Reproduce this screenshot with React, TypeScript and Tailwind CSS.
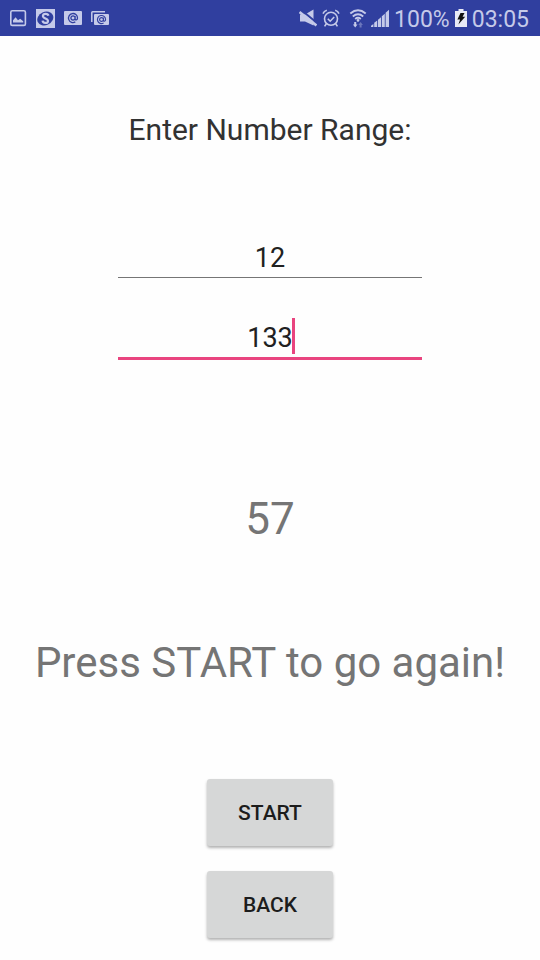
import { useState } from "react";

function PictureIcon() {
  return (
    <svg width="18" height="18" viewBox="0 0 18 18" aria-hidden="true">
      <rect x="1.8" y="1.8" width="14.6" height="14.6" rx="1.5" fill="none" stroke="currentColor" strokeWidth="1.6" />
      <path d="M4 13.5v-2.2l2.6-3 2.4 3 2.2-1.6 3 2.6v1.2z" fill="currentColor" />
    </svg>
  );
}

function CoinIcon() {
  return (
    <svg width="19" height="19" viewBox="0 0 19 19" aria-hidden="true">
      <rect width="19" height="19" fill="currentColor" />
      <ellipse cx="9.3" cy="9.5" rx="8.3" ry="6.6" transform="rotate(-25 9.3 9.5)" fill="#303f9f" />
      <path d="M12.4 6.8C12 4.4 7.2 4.2 6.9 6.9c-.2 2.8 5.4 2.4 5.1 5.2-.3 2.7-5.2 2.4-5.4-.4" fill="none" stroke="currentColor" strokeWidth="2.2" />
    </svg>
  );
}

function AtSign() {
  return (
    <path
      d="M2.1 0a2.1 2.1 0 1 1-4.2 0 2.1 2.1 0 0 1 4.2 0zm0-2.1v2.7c0 2 2.4 1.7 2.4-.6a4.5 4.5 0 1 0-2.2 3.9"
      fill="none"
      stroke="#303f9f"
      strokeWidth="1.3"
    />
  );
}

function MailIcon() {
  return (
    <svg width="18" height="14" viewBox="0 0 18 14" aria-hidden="true">
      <rect width="18" height="14" rx="1" fill="currentColor" />
      <g transform="translate(9 7)">
        <AtSign />
      </g>
    </svg>
  );
}

function MailStackIcon() {
  return (
    <svg width="18" height="14" viewBox="0 0 18 14" aria-hidden="true">
      <path d="M.8 11V1.6Q.8.8 1.6.8H14" fill="none" stroke="currentColor" strokeWidth="1.5" />
      <rect x="3" y="3" width="15" height="11" rx="1" fill="currentColor" />
      <g transform="translate(10.5 8.5) scale(.9)">
        <AtSign />
      </g>
    </svg>
  );
}

function MuteIcon() {
  return (
    <svg width="18" height="18" viewBox="0 0 18 18" aria-hidden="true">
      <path d="M1 5.5h5L14.5.5v16L6 12.5H1z" fill="currentColor" />
      <path d="M2 .8 18 14" stroke="#303f9f" strokeWidth="2" />
      <path d="M.5 3 17.5 16.5" stroke="currentColor" strokeWidth="2.6" />
    </svg>
  );
}

function AlarmIcon() {
  return (
    <svg width="18" height="19" viewBox="0 0 18 19" fill="none" stroke="currentColor" strokeWidth="1.6" aria-hidden="true">
      <circle cx="9" cy="9.8" r="6.5" />
      <path d="m5.8 9.8 2.4 2.4 4-4.2M1 4.6Q2 2 4.8 1.2M17 4.6Q16 2 13.2 1.2M4.3 14.8 2.6 17.4M13.7 14.8l1.7 2.6" />
    </svg>
  );
}

function WifiIcon() {
  return (
    <svg width="18" height="19" viewBox="0 0 18 19" aria-hidden="true">
      <path d="M1.3 4.4Q9-2 16.7 4.4M3.8 7.4Q9 3 14.2 7.4M6.2 10Q9 7.7 11.8 10" fill="none" stroke="currentColor" strokeWidth="1.9" />
      <circle cx="9" cy="11.4" r="1.3" fill="currentColor" />
      <path d="M5.2 13h2v2.6h1.3l-2.3 3-2.3-3h1.3z" fill="currentColor" />
      <path d="m11.6 13 2.3 3h-1.3v2.6h-2V16H9.3z" fill="currentColor" opacity=".4" />
    </svg>
  );
}

function SignalIcon() {
  return (
    <svg width="18" height="18" viewBox="0 0 18 18" fill="currentColor" aria-hidden="true">
      <path d="M0 18v-1.3L2.4 15v3zM3.2 18v-4.2l3-2.3V18zM7 18v-7.3l3-2.5V18zM10.8 18V7.2l3-2.5V18zM14.6 18V3.8L18 .8V18z" />
    </svg>
  );
}

function BatteryIcon() {
  return (
    <svg width="12" height="18" viewBox="0 0 12 18" aria-hidden="true">
      <path d="M3.5 0h5v2H12v16H0V2h3.5z" fill="#e8eaf6" />
      <path d="M5.5 4h4L7.6 7.8h2.6L3.4 15.6l1.7-5.2H2.4z" fill="#111" />
    </svg>
  );
}

function StatusBar() {
  return (
    <header className="flex h-9 items-center justify-between bg-[#303f9f] pl-[9px] pr-[11px] text-[#c5cae9]">
      <div className="flex items-center gap-[9px]">
        <PictureIcon />
        <CoinIcon />
        <MailIcon />
        <MailStackIcon />
      </div>
      <div className="flex items-center gap-[5px] text-[23px] leading-7">
        <MuteIcon />
        <AlarmIcon />
        <div className="flex items-center gap-1 pl-1">
          <WifiIcon />
          <SignalIcon />
        </div>
        <span className="pt-[3px]">100%</span>
        <BatteryIcon />
        <time className="pt-[3px]">03:05</time>
      </div>
    </header>
  );
}

const buttonStyle =
  "h-[67px] w-[126px] rounded-[3px] bg-[#d6d7d7] text-[21px] leading-7 font-medium text-[#1c1c1c] shadow-[0_2px_3px_rgba(0,0,0,0.3)]";

export default function App() {
  const [from, setFrom] = useState("12");
  const [to, setTo] = useState("133");

  return (
    <div className="min-h-screen bg-[#fefefe] font-['Roboto',sans-serif]">
      <StatusBar />
      <main className="flex flex-col items-center px-4 pt-[74px] pb-[22px] text-center text-[#757575]">
        <h1 className="text-[30px] leading-10 text-[#323232]">Enter Number Range:</h1>

        <div className="mt-[87px] flex w-3/5 flex-col gap-10">
          <input
            aria-label="Range start"
            inputMode="numeric"
            value={from}
            onChange={(e) => setFrom(e.target.value)}
            className="h-[41px] w-full border-b border-[#757575] bg-transparent pt-px text-center text-[27px] leading-9 text-[#212121] outline-none"
          />
          <div className="relative">
            <input
              aria-label="Range end"
              inputMode="numeric"
              value={to}
              onChange={(e) => setTo(e.target.value)}
              className="block h-[42px] w-full border-b-3 border-[#e9447f] bg-transparent pt-px text-center text-[27px] leading-9 text-[#212121] caret-transparent outline-none"
            />
            <span className="absolute top-0 left-1/2 ml-[22px] h-9 w-[3px] bg-[#e9447f]" />
          </div>
        </div>

        <output className="mt-[131px] text-[44px] leading-[56px]">57</output>
        <p className="mt-[88px] text-[42px] leading-[56px]">Press START to go again!</p>

        <div className="mt-[88px] flex flex-col gap-[25px]">
          <button type="button" className={buttonStyle}>START</button>
          <button type="button" className={buttonStyle}>BACK</button>
        </div>
      </main>
    </div>
  );
}
